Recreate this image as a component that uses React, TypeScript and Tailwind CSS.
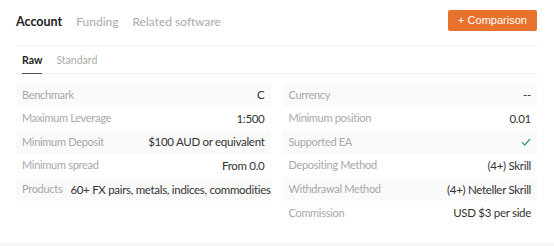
import React from 'react'

interface Row {
  label: string
  value: React.ReactNode
}

const Check = () => (
  <svg width="10" height="8" viewBox="0 0 10 8" fill="none">
    <path d="M1 4.2L3.8 7L9 1" stroke="#3a9a6a" strokeWidth="1.2" />
  </svg>
)

const leftRows: Row[] = [
  { label: 'Benchmark', value: 'C' },
  { label: 'Maximum Leverage', value: '1:500' },
  { label: 'Minimum Deposit', value: '$100 AUD or equivalent' },
  { label: 'Minimum spread', value: 'From 0.0' },
  { label: 'Products', value: '60+ FX pairs, metals, indices, commodities' },
]

const rightRows: Row[] = [
  { label: 'Currency', value: '--' },
  { label: 'Minimum position', value: '0.01' },
  { label: 'Supported EA', value: <Check /> },
  { label: 'Depositing Method', value: '(4+) Skrill' },
  { label: 'Withdrawal Method', value: '(4+) Neteller Skrill' },
  { label: 'Commission', value: 'USD $3 per side' },
]

function InfoColumn({ rows }: { rows: Row[] }) {
  return (
    <div className="flex flex-col">
      {rows.map((row, i) => (
        <div
          key={row.label}
          className={`flex items-center justify-between gap-2 h-[23.6px] px-1.5 ${i % 2 === 0 ? 'bg-[#fafafa]' : ''}`}
        >
          <span className="text-[11px] tracking-[-0.3px] text-[#a8a8a8] whitespace-nowrap">{row.label}</span>
          <span className="text-[11.5px] tracking-[-0.3px] text-[#333333] whitespace-nowrap">{row.value}</span>
        </div>
      ))}
    </div>
  )
}

export default function App() {
  return (
    <div className="w-[554px] h-[246px] bg-white overflow-hidden font-['Lato',sans-serif]">
      <div className="pl-4 pr-[17px]">
        {/* Header tabs */}
        <div className="flex items-center justify-between h-[46px] border-b border-[#f2f2f2]">
          <div className="flex items-center gap-[14px] text-[12px] -mt-[1px]">
            <span className="text-[12.5px] font-bold text-[#222222]">Account</span>
            <span className="text-[#aaaaaa]">Funding</span>
            <span className="text-[#aaaaaa]">Related software</span>
          </div>
          <button className="h-[21px] w-[89px] -mt-[5px] rounded-[2px] bg-[#e8722c] text-white text-[11px] font-['Liberation_Sans',sans-serif]">
            + Comparison
          </button>
        </div>

        {/* Sub tabs */}
        <div className="flex items-end gap-[14px] h-[28px] pl-1.5 border-b border-[#f0f0f0] text-[10.5px]">
          <span className="font-bold text-[#222222] pb-[4px] border-b border-[#555555] -mb-px">Raw</span>
          <span className="text-[#aaaaaa] pb-[4px]">Standard</span>
        </div>

        {/* Details */}
        <div className="grid grid-cols-2 gap-x-3 pt-[9px]">
          <InfoColumn rows={leftRows} />
          <InfoColumn rows={rightRows} />
        </div>
      </div>
      <div className="mt-[18px] h-[3px] bg-[#f5f5f5]" />
    </div>
  )
}
